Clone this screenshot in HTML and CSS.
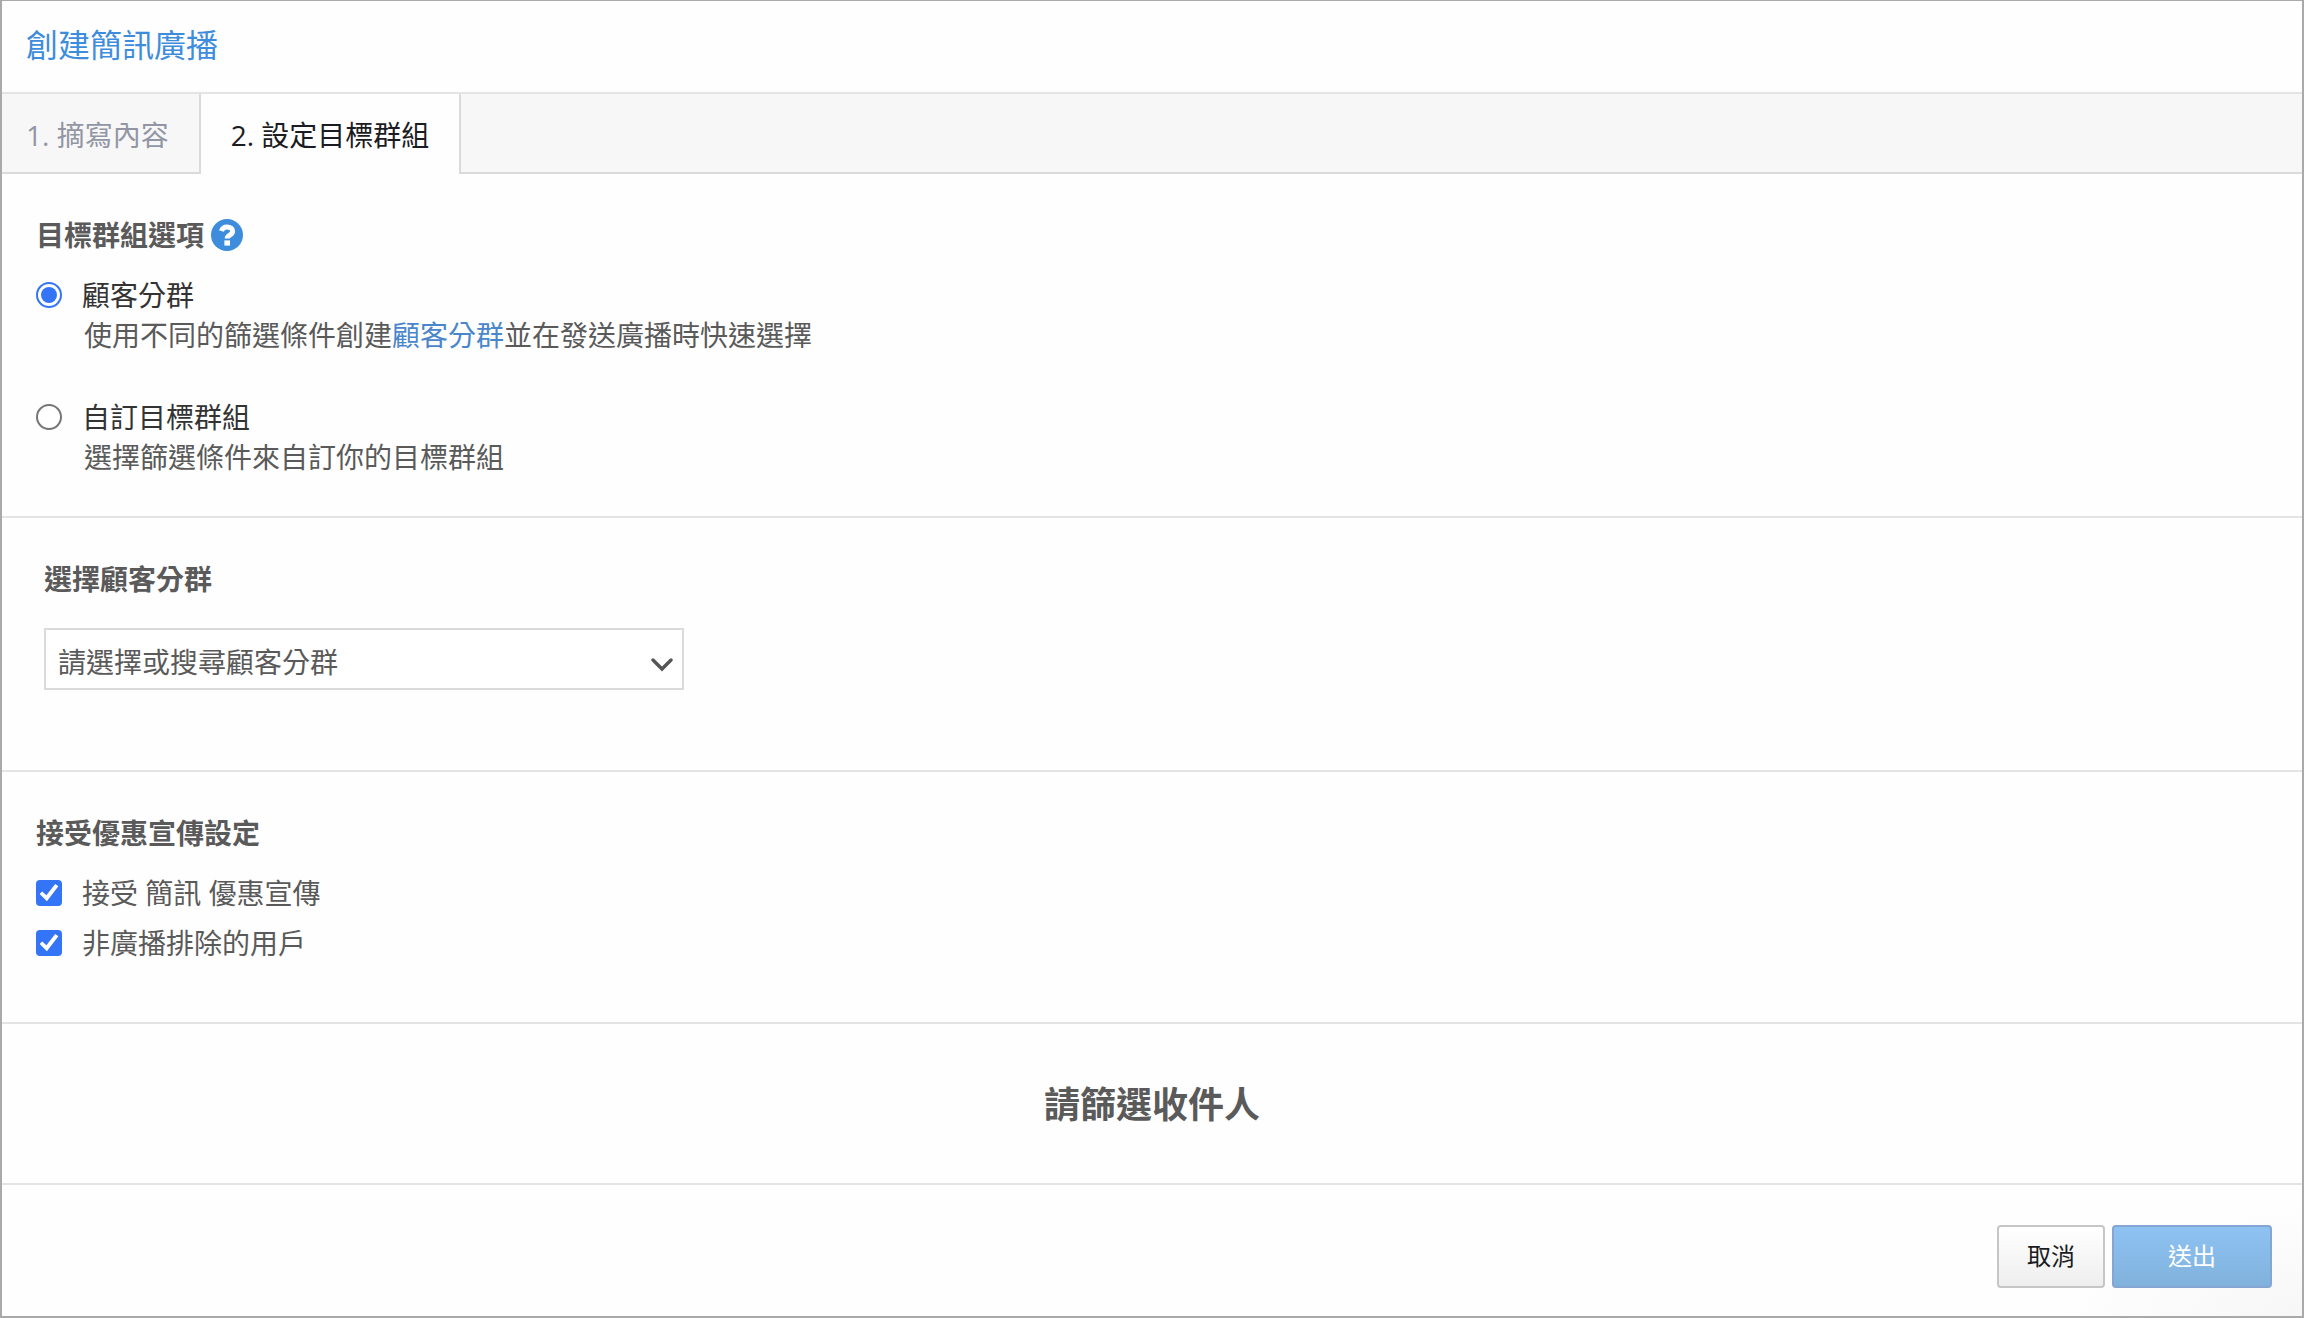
FILE: index.html
```html
<!DOCTYPE html>
<html lang="zh-Hant">
  <head>
    <meta charset="UTF-8" />
    <meta name="viewport" content="width=device-width, initial-scale=1.0" />
    <title>創建簡訊廣播</title>
    <link rel="stylesheet" href="styles.css">
  </head>
  <body>
    <form class="broadcast">
      <header class="broadcast-header">
        <h1 class="title">創建簡訊廣播</h1>
      </header>

      <nav class="tabs">
        <a class="tab" href="#content">1. 摘寫內容</a>
        <a class="tab tab-active" href="#target" aria-current="step">2. 設定目標群組</a>
      </nav>

      <!-- target group options -->
      <section class="section">
        <div class="section-heading">
          <h2 class="subtitle">目標群組選項</h2>
          <button class="help" type="button" aria-label="說明">
            <svg viewBox="0 0 32 32" aria-hidden="true">
              <circle cx="16" cy="16" r="16" fill="#3e8ddd" />
              <path d="M10.4 12C11.4 9.2 13.4 8 16 8c3.2 0 5.6 1.5 5.6 4.2 0 4-5.4 3.6-5.4 7.2" fill="none" stroke="#fff" stroke-width="5" />
              <rect x="13.4" y="21.4" width="5.6" height="5.2" fill="#fff" />
            </svg>
          </button>
        </div>
        <div class="options">
          <div class="option">
            <div class="choice">
              <input type="radio" name="target" id="target-segment" checked />
              <label class="option-name" for="target-segment">顧客分群</label>
            </div>
            <p class="option-text">使用不同的篩選條件創建<a href="#segments">顧客分群</a>並在發送廣播時快速選擇</p>
          </div>
          <div class="option">
            <div class="choice">
              <input type="radio" name="target" id="target-custom" />
              <label class="option-name" for="target-custom">自訂目標群組</label>
            </div>
            <p class="option-text">選擇篩選條件來自訂你的目標群組</p>
          </div>
        </div>
      </section>

      <!-- customer segment -->
      <section class="section section-segment">
        <label class="subtitle" for="segment">選擇顧客分群</label>
        <div class="select-box">
          <select id="segment">
            <option>請選擇或搜尋顧客分群</option>
          </select>
          <svg class="arrow" viewBox="0 0 22 14" aria-hidden="true">
            <path d="M2 2l9 9 9-9" fill="none" stroke="#555" stroke-width="3.4" stroke-linecap="round" />
          </svg>
        </div>
      </section>

      <!-- marketing settings -->
      <section class="section section-accept">
        <div class="section-heading">
          <h2 class="subtitle">接受優惠宣傳設定</h2>
        </div>
        <div class="checks">
          <div class="choice">
            <input type="checkbox" id="accept-sms" checked />
            <label for="accept-sms">接受 簡訊 優惠宣傳</label>
          </div>
          <div class="choice">
            <input type="checkbox" id="not-excluded" checked />
            <label for="not-excluded">非廣播排除的用戶</label>
          </div>
        </div>
      </section>

      <section class="recipients">
        <p>請篩選收件人</p>
      </section>

      <footer class="actions">
        <button class="btn" type="button">取消</button>
        <button class="btn btn-primary" type="submit">送出</button>
      </footer>
    </form>
  </body>
</html>
```

FILE: styles.css
```css
:root {
  --blue: #3e8ddd;
  --control: #3474f7;
  --text: #5a5a5a;
  --dark: #1b1c22;
  --muted: #9296a4;
  --line: #e4e4e4;
  --line-dark: #dadada;
  --frame: #a9a9a9;
  --sm: 24px;
  --md: 28px;
  --lg: 32px;
  --xl: 36px;
}
* {
  box-sizing: border-box;
}
body {
  margin: 0;
  font-family: "Open Sans", "Noto Sans CJK TC", sans-serif;
  font-size: var(--md);
  line-height: 40px;
  color: var(--text);
}
h1,
h2,
p {
  margin: 0;
}
a {
  color: #4a86cb;
  text-decoration: none;
}
.broadcast {
  display: flex;
  flex-direction: column;
  min-height: 100vh;
  border: 2px solid var(--frame);
  border-top-width: 1px;
  background-color: #fefefe;
}
.broadcast-header {
  padding: 24px 24px 27px;
  border-bottom: 2px solid var(--line);
}
.title {
  font-size: var(--lg);
  font-weight: 400;
  color: var(--blue);
}
.tabs {
  display: flex;
  background-color: #f7f7f7;
  box-shadow: inset 0 -2px var(--line-dark);
}
.tab {
  padding: 21px 30px 19px 24px;
  border-right: 2px solid var(--line-dark);
  color: var(--muted);
}
.tab-active {
  padding-left: 30px;
  background-color: #fefefe;
  color: var(--dark);
}
.section {
  padding: 41px 34px 39px;
  border-bottom: 2px solid var(--line);
}
.section-heading {
  display: flex;
  align-items: center;
  gap: 7px;
  margin-bottom: 20px;
}
.subtitle {
  font-size: var(--md);
  font-weight: 700;
}
.help {
  width: 32px;
  height: 32px;
  padding: 0;
  border: 0;
  background: none;
  cursor: pointer;
}
.help svg {
  display: block;
}
.options {
  display: grid;
  gap: 42px;
}
.choice {
  display: flex;
  align-items: center;
  gap: 20px;
}
.option-name {
  color: #333;
}
.option-text {
  margin-left: 48px;
}
input {
  appearance: none;
  display: grid;
  place-items: center;
  width: 26px;
  height: 26px;
  margin: 0;
  background-color: #fff;
}
input[type="radio"] {
  border: 2px solid #767676;
  border-radius: 50%;
}
input[type="radio"]:checked {
  border-color: var(--control);
}
input[type="radio"]:checked::before {
  content: "";
  width: 16px;
  height: 16px;
  border-radius: 50%;
  background-color: var(--control);
}
input[type="checkbox"] {
  border-radius: 4px;
  background-color: var(--control);
}
input[type="checkbox"]:checked::before {
  content: "";
  width: 26px;
  height: 26px;
  background-color: #fff;
  clip-path: polygon(14% 54%, 24% 44%, 40% 59%, 74% 15%, 86% 24%, 42% 82%);
}
.section-segment {
  padding: 41px 42px 80px;
}
.section-segment .subtitle {
  display: block;
  margin-bottom: 29px;
}
.select-box {
  display: grid;
  align-items: center;
  max-width: 640px;
}
.select-box select,
.arrow {
  grid-area: 1 / 1;
}
select {
  appearance: none;
  width: 100%;
  height: 62px;
  padding: 6px 48px 0 12px;
  border: 2px solid var(--line-dark);
  border-radius: 0;
  background-color: #fff;
  font: inherit;
  color: var(--text);
}
.arrow {
  justify-self: end;
  width: 22px;
  height: 14px;
  margin-top: 12px;
  margin-right: 11px;
  pointer-events: none;
}
.section-accept {
  padding-bottom: 59px;
}
.checks {
  display: grid;
  gap: 10px;
}
.recipients {
  padding: 61px 0 58px;
  border-bottom: 2px solid var(--line);
  font-size: var(--xl);
  font-weight: 700;
  text-align: center;
}
.actions {
  flex: 1;
  display: flex;
  justify-content: flex-end;
  align-items: flex-start;
  gap: 7px;
  padding: 40px 30px 28px;
  background-image: radial-gradient(ellipse 240px 110px at 100% 100%, #f7f7f7, #fefefe);
}
.btn {
  min-width: 108px;
  height: 63px;
  padding: 0 24px 2px;
  border: 2px solid #c6c6c6;
  border-radius: 4px;
  background: linear-gradient(#fff, #eee);
  font: inherit;
  font-size: var(--sm);
  color: var(--dark);
  cursor: pointer;
}
.btn-primary {
  min-width: 160px;
  border-color: #85a5d2;
  background: linear-gradient(#8ec2f3, #80b2dc);
  color: #fff;
}
```
